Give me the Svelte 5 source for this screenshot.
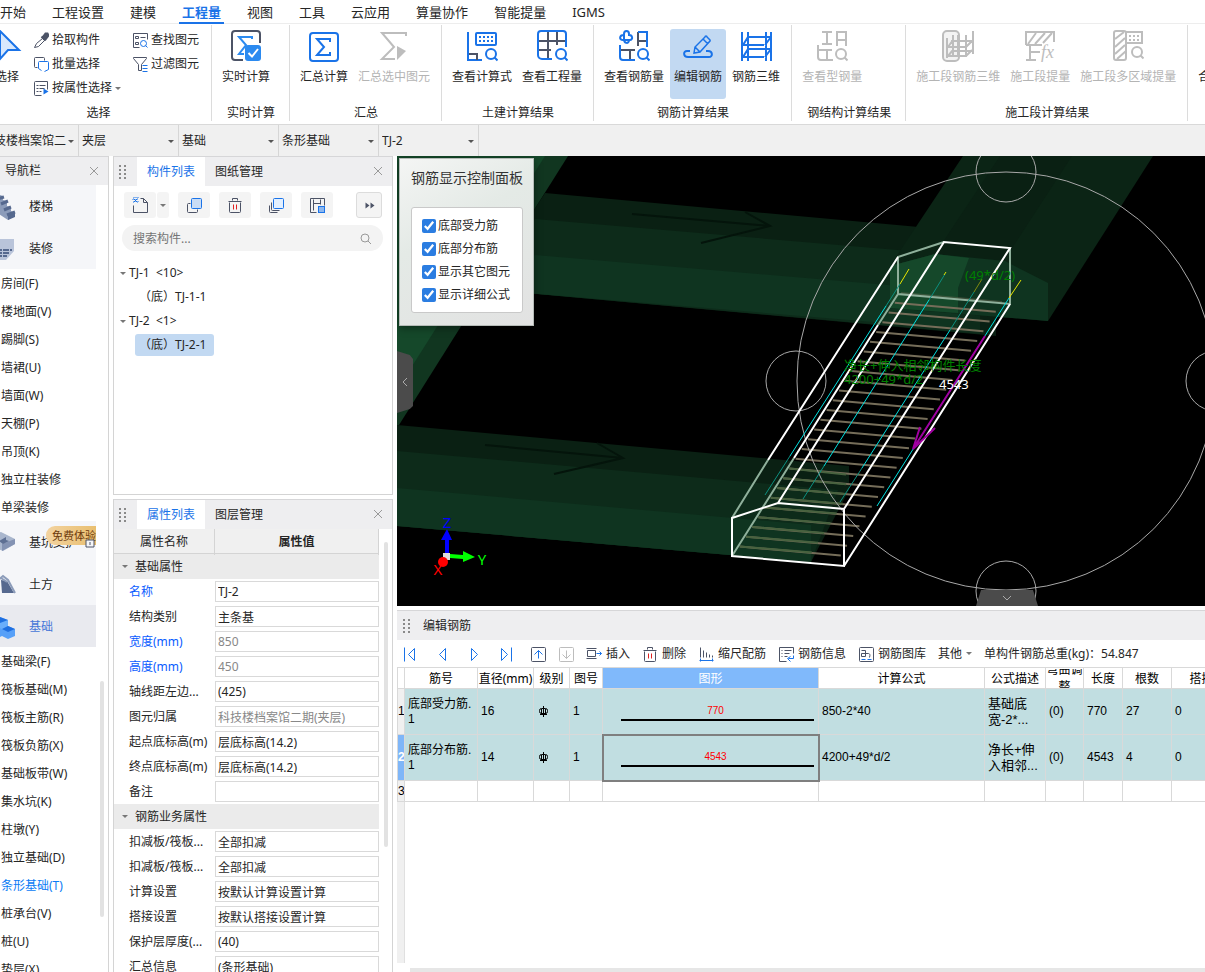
<script>
	const blue = '#1a73e8';
	const dark = '#4c5366';
	const gray = '#bdbdbd';

	const icons = {
		sigmaCheck: `<path d="M13 30H5a3 3 0 0 1-3-3V4a3 3 0 0 1 3-3h22a3 3 0 0 1 3 3v9" stroke="${dark}" stroke-width="2"/><path d="M22 9V7H9l7 8-7 9h5" stroke="#2b8af0" stroke-width="2"/><rect x="15" y="15" width="16" height="16" rx="3" fill="#2b8af0" stroke="none"/><path d="M18.500 23l3.500 3.500 6-7.500" stroke="#fff" stroke-width="2"/>`,
		sigma: `<rect x="2" y="3" width="28" height="28" rx="3" stroke="${blue}" stroke-width="2"/><path d="M22 12V9H9l7 8-7 8h13v-3" stroke="${blue}" stroke-width="2"/>`,
		sigmaCursor: `<path d="M28 6V3H4l12 14L4 29h13" stroke="${gray}" stroke-width="2"/><path d="M19 16v14l9-9z" fill="${gray}" stroke="none"/>`,
		formula: `<path d="M2 2v28h14" stroke="${blue}" stroke-width="2"/><path d="M3 24h8v6" stroke="${dark}" stroke-width="2"/><rect x="10" y="3" width="20" height="12" rx="1" stroke="${blue}" stroke-width="2"/><path d="M13 7h14M13 11h14" stroke="${blue}" stroke-width="2" stroke-dasharray="2 2"/><circle cx="25" cy="24" r="5" stroke="${blue}" stroke-width="2"/><path d="M28.500 27.500l3 3" stroke="${blue}" stroke-width="2"/>`,
		quantity: `<path d="M3 11h26M3 20h12M12 2v28M21 2v13" stroke="${dark}" stroke-width="2"/><path d="M16 29H6a4 4 0 0 1-4-4V4a3 3 0 0 1 3-3h22a3 3 0 0 1 3 3v13" stroke="${blue}" stroke-width="2"/><circle cx="25" cy="24" r="5" stroke="${blue}" stroke-width="2"/><path d="M28.500 27.500l3 3" stroke="${blue}" stroke-width="2"/>`,
		rebarQty: `<path d="M11 4c0-4-5-4-5 0v5c0 5 5 5 5 1M6 5c-5 0-5 5-1 5h7c3 0 3-5-1-5h-1" stroke="${blue}" stroke-width="2"/><path d="M20 16V2M21 11h8" stroke="${dark}" stroke-width="2"/><path d="M20 2h9v15" stroke="${blue}" stroke-width="2"/><path d="M2 15v12a3 3 0 0 0 3 3h12" stroke="${blue}" stroke-width="2"/><path d="M3 20h14M12 20v9" stroke="${dark}" stroke-width="2"/><circle cx="25" cy="24" r="5" stroke="${blue}" stroke-width="2"/><path d="M28.500 27.500l3 3" stroke="${blue}" stroke-width="2"/>`,
		rebarEdit: `<path d="M8 21H5c-4 0-4 6 1 6h21c4 0 4-6-1-6h-2" stroke="${blue}" stroke-width="2"/><path d="M12 23l1-6L23 7a1 1 0 0 1 2 0l3 3a1 1 0 0 1 0 1L18 22zM21 9l5 5M13 17l5 5" stroke="${blue}" stroke-width="1.500"/>`,
		rebar3d: `<path d="M2 2v29M8 2v29M26 2v29M31 2v29M8 7h22M8 15h16M8 19h22M4 27h20M3 15l5-8M25 15l6-8M3 27l5-8M25 27l6-8M3 15h6M3 27h6" stroke="${blue}" stroke-width="2"/>`,
		steelQty: `<path d="M6 2h10M6 14h10M11 2v12M21 16V2h9v14M21 10h9M2 15v12a3 3 0 0 0 3 3h12M3 20h13M11 20v9" stroke="${gray}" stroke-width="2"/><circle cx="25" cy="24" r="5" stroke="${gray}" stroke-width="2"/><path d="M28.500 27.500l3 3" stroke="${gray}" stroke-width="2"/>`,
		stage3d: `<rect x="1" y="1" width="16" height="30" rx="4" fill="#f3f3f3" stroke="${gray}" stroke-width="2"/><path d="M5 8v20M11 5v22M16 5v22M24 5v22M31 1v23M9 11h21M6 17h18M11 21h19M6 26h18M6 17l5-7M6 26l5-6M24 17l6-6M24 26l6-6" stroke="${gray}" stroke-width="2"/>`,
		stageQty: `<path d="M2 15V2h28v10M2 15h16M4 14L12 3M11 14L21 3M19 13l9-10M6 15v14M2 30h10M6 22h10" stroke="${gray}" stroke-width="2"/><text x="17" y="28" font-size="18" font-style="italic" font-family="Liberation Serif" fill="${gray}" stroke="none">fx</text>`,
		stageArea: `<rect x="2" y="1" width="12" height="29" rx="2" stroke="${gray}" stroke-width="2"/><path d="M3 9l9-7M3 17l10-9M3 24l10-9M5 29l9-8" stroke="${gray}" stroke-width="2"/><path d="M14 2h16v11H14" stroke="${gray}" stroke-width="2"/><path d="M17 6h11M17 10h11" stroke="${gray}" stroke-width="2" stroke-dasharray="2 2"/><circle cx="25" cy="22" r="5" stroke="${gray}" stroke-width="2"/><path d="M28.500 25.500l3 3" stroke="${gray}" stroke-width="2"/>`,
		cursor: `<path d="M9 1v28l8-9h11z" fill="#d8e8fc" stroke="${blue}" stroke-width="2"/>`,
		dropper: `<path d="M1 15l2-4 6-5 2 2-6 6z" stroke="${dark}"/><path d="M8 4l4 4M9 5l3-4 2 0 1 2-3 4z" fill="${dark}" stroke="${dark}" stroke-width="2"/>`,
		batch: `<path d="M4 11H2a1 1 0 0 1-1-1V2a1 1 0 0 1 1-1h8a1 1 0 0 1 1 1v2" stroke="${dark}"/><path d="M11 15l4-2V6a1 1 0 0 0-1-1H6a1 1 0 0 0-1 1v6l3 2" stroke="${blue}"/>`,
		byProp: `<path d="M8 15H2a1 1 0 0 1-1-1V2a1 1 0 0 1 1-1h12v8M3 5h2M6 5h6M3 8h2M6 8h5M3 11h2M6 11h2" stroke="${dark}"/><path d="M10 8v6l5-3z" fill="${blue}" stroke="none"/>`,
		find: `<path d="M7 15H1V1h14v6M3 4h3v2H3zM8 5h5M3 10h3v2H3z" stroke="${dark}"/><circle cx="11" cy="11" r="3" stroke="${blue}"/><path d="M13 13l2 2" stroke="${blue}"/>`,
		filter: `<path d="M6 14V8L1 2V1h13v1L9 8v6z" stroke="${dark}"/><path d="M10 9h5M10 12h5M10 15h5" stroke="${blue}"/>`,
		newFile: `<path d="M1 8v7h14V5l-4-4H8M11 1v4h4" stroke="${dark}"/><path d="M1 0h5M0 2h5M1 4h5" stroke="${blue}" stroke-dasharray="1 1"/><path d="M1 1l4 4M5 1L1 5" stroke="${blue}"/>`,
		copy: `<path d="M4 6H2a1 1 0 0 0-1 1v7a1 1 0 0 0 1 1h8a1 1 0 0 0 1-1v-2" stroke="${dark}"/><rect x="5" y="1" width="10" height="10" rx="1" fill="#c9dcf5" stroke="${blue}"/>`,
		trash: `<path d="M1 4h13M5 3V1h5v2M2 5v9a1 1 0 0 0 1 1h9a1 1 0 0 0 1-1V5" stroke="${dark}"/><path d="M6 7v5M9 7v5" stroke="#e02020"/>`,
		layers: `<path d="M3 5v7a1 1 0 0 0 1 1h7M1 8v6a1 1 0 0 0 1 1h7" stroke="${dark}"/><rect x="5" y="1" width="10" height="10" rx="1" fill="#e3f0ff" stroke="${blue}"/>`,
		save: `<path d="M7 15H1V1h14v7M4 2v11M4 6h7M11 2v5" stroke="${dark}"/><rect x="9" y="9" width="6" height="6" fill="#8db7ee" stroke="${blue}"/>`,
		more: `<path d="M4 5v6l4-3zM9 5v6l4-3z" fill="${dark}" stroke="none"/>`,
		first: `<path d="M2 1v14M12 2L6 8l6 6z" stroke="${blue}"/>`,
		prev: `<path d="M11 2L5 8l6 6z" stroke="${blue}"/>`,
		next: `<path d="M5 2l6 6-6 6z" stroke="${blue}"/>`,
		last: `<path d="M13 1v14M3 2l6 6-6 6z" stroke="${blue}"/>`,
		up: `<rect x="1" y="1" width="14" height="14" rx="1" stroke="${dark}"/><path d="M8 12V4M4 8l4-4 4 4" stroke="${blue}"/>`,
		down: `<rect x="1" y="1" width="14" height="14" rx="1" stroke="${gray}"/><path d="M8 4v8M4 8l4 4 4-4" stroke="${gray}"/>`,
		insert: `<path d="M0 2h10M0 12h10M1 4v6h8V4z" stroke="${dark}"/><path d="M10 7h5M13 5l2 2-2 2" stroke="${blue}"/>`,
		scale: `<path d="M2 1v10M5 4v7M8 6v5M11 8v3M14 9v2" stroke="${dark}"/><path d="M1 14h14M2 12v3M14 12v3" stroke="${blue}"/>`,
		info: `<path d="M8 15H1V1h14v6M3 4h1M6 4h7M3 7h1M6 7h5M3 10h1M6 10h3" stroke="${dark}"/><path d="M15 9v3h-5M12 10l-3 2 3 3" stroke="${blue}"/>`,
		library: `<rect x="1" y="1" width="14" height="14" rx="1" stroke="${dark}"/><path d="M3 4h4v6H3V7h7c1 0 2 1 1 4" stroke="${dark}"/><path d="M3 13h4M9 13h4" stroke="${blue}"/>`,
		stair: `<path d="M4 0l10 3v4l4 1v5l4 1v4l4 2v3l-7 4L4 17z" fill="#8c9cba" stroke="none"/><path d="M8 6l7-2M12 11l7-3M15 17l7-3M18 22l8-3" stroke="#56698f" stroke-width="3"/><path d="M19 22l7-2v4l-7 3z" fill="#56698f" stroke="none"/>`,
		brush: `<path d="M0 4h25v12l-8 9H0z" fill="#b9c4da" stroke="none"/><path d="M0 15h23M0 18h21M0 21h18" stroke="#56698f" stroke-width="2" stroke-dasharray="6 1"/>`,
		pit: `<path d="M4 5l8-2 14 7v5L14 22 4 18z" fill="#a9b6cd" stroke="none"/><path d="M13 15l13-5v5l-13 7z" fill="#8493b3" stroke="none"/><path d="M10 12l7-4v3l3 1-6 3z" fill="#5d6f93" stroke="none"/>`,
		earth: `<path d="M12 9l6 1 7 12H13z" fill="#56698f" stroke="none"/><path d="M8 22V10l6-5 5 4 7 13M12 7l6 4" stroke="#8c9cba" stroke-width="2"/>`,
		cubes: `<path d="M11 4l8 3v7l-8 3-7-3V7z" fill="#6aaefb" stroke="none"/><path d="M19 13l7 3v7l-7 3-6-3v-7zM7 13l6 3v7l-6 3z" fill="#57a0f8" stroke="none"/><path d="M11 4l8 3-8 3-7-3zM19 13l7 3-7 3-6-3z" fill="#1f6fe0" stroke="none"/>`
	};

	const menus = ['开始', '工程设置', '建模', '工程量', '视图', '工具', '云应用', '算量协作', '智能提量', 'IGMS'];
	let activeMenu = $state('工程量');

	const groups = [
		{ title: '实时计算', tools: [['sigmaCheck', '实时计算']] },
		{ title: '汇总', tools: [['sigma', '汇总计算'], ['sigmaCursor', '汇总选中图元', true]] },
		{ title: '土建计算结果', tools: [['formula', '查看计算式'], ['quantity', '查看工程量']] },
		{ title: '钢筋计算结果', tools: [['rebarQty', '查看钢筋量'], ['rebarEdit', '编辑钢筋'], ['rebar3d', '钢筋三维']] },
		{ title: '钢结构计算结果', tools: [['steelQty', '查看型钢量', true]] },
		{ title: '施工段计算结果', tools: [['stage3d', '施工段钢筋三维', true], ['stageQty', '施工段提量', true], ['stageArea', '施工段多区域提量', true]] }
	];

	const filters = [['楼栋', '科技楼档案馆二'], ['楼层', '夹层'], ['类别', '基础'], ['类型', '条形基础'], ['构件', 'TJ-2']];

	const navItems = [
		{ icon: 'stair', name: '楼梯' },
		{ icon: 'brush', name: '装修' },
		...['房间(F)', '楼地面(V)', '踢脚(S)', '墙裙(U)', '墙面(W)', '天棚(P)', '吊顶(K)', '独立柱装修', '单梁装修'].map((name) => ({ name })),
		{ icon: 'pit', name: '基坑支护', trial: true },
		{ icon: 'earth', name: '土方' },
		{ icon: 'cubes', name: '基础', open: true },
		...['基础梁(F)', '筏板基础(M)', '筏板主筋(R)', '筏板负筋(X)', '基础板带(W)', '集水坑(K)', '柱墩(Y)', '独立基础(D)', '条形基础(T)', '桩承台(V)', '桩(U)', '垫层(X)'].map((name) => ({ name }))
	];
	let activeNav = $state('条形基础(T)');

	const tree = [
		{ name: 'TJ-1', count: 10, child: 'TJ-1-1' },
		{ name: 'TJ-2', count: 1, child: 'TJ-2-1' }
	];
	let picked = $state('TJ-2-1');

	const props = [
		{
			title: '基础属性',
			rows: [
				['名称', 'TJ-2', 'key'],
				['结构类别', '主条基'],
				['宽度(mm)', '850', 'key off'],
				['高度(mm)', '450', 'key off'],
				['轴线距左边...', '(425)'],
				['图元归属', '科技楼档案馆二期(夹层)', 'off'],
				['起点底标高(m)', '层底标高(14.2)'],
				['终点底标高(m)', '层底标高(14.2)'],
				['备注', '']
			]
		},
		{
			title: '钢筋业务属性',
			rows: [
				['扣减板/筏板...', '全部扣减'],
				['扣减板/筏板...', '全部扣减'],
				['计算设置', '按默认计算设置计算'],
				['搭接设置', '按默认搭接设置计算'],
				['保护层厚度(...', '(40)'],
				['汇总信息', '(条形基础)']
			]
		}
	];

	let display = $state([
		{ label: '底部受力筋', on: true },
		{ label: '底部分布筋', on: true },
		{ label: '显示其它图元', on: true },
		{ label: '显示详细公式', on: true }
	]);

	const columns = [['筋号', 73], ['直径(mm)', 56], ['级别', 36], ['图号', 33], ['图形', 216], ['计算公式', 166], ['公式描述', 61], ['弯曲调整', 38], ['长度', 39], ['根数', 49], ['搭接', 60]];
	const bars = [
		{ name: '底部受力筋.', d: 16, shape: 770, formula: '850-2*40', desc: ['基础底', '宽-2*...'], len: 770, count: 27 },
		{ name: '底部分布筋.', d: 14, shape: 4543, formula: '4200+49*d/2', desc: ['净长+伸', '入相邻...'], len: 4543, count: 4 }
	];
	let activeBar = $state(1);

	const rungs = Array.from({ length: 27 }, (_, i) => ({ x: 901 - i * 6.2, y: 293 + i * 9.75 }));
</script>

{#snippet icon(name, size = 16)}
	<svg class="icon" width={size} height={size} viewBox={size === 16 ? '-.5 -.5 16 16' : `0 0 ${size} ${size}`} fill="none" aria-hidden="true">{@html icons[name] ?? ''}</svg>
{/snippet}

{#snippet grip()}
	<svg class="grip" width="8" height="16" viewBox="0 0 8 16" fill="#8a8a8a" aria-hidden="true">
		{#each [1, 5, 9, 13] as y}
			<rect x="0" {y} width="2" height="2" /><rect x="5" {y} width="2" height="2" />
		{/each}
	</svg>
{/snippet}

{#snippet close()}
	<button class="close" aria-label="关闭">
		<svg width="10" height="10" viewBox="0 0 10 10" stroke="#999" fill="none"><path d="M1 1l8 8M9 1L1 9" /></svg>
	</button>
{/snippet}

<div class="app">
	<nav class="menu">
		{#each menus as m}
			<button class:active={m === activeMenu} onclick={() => (activeMenu = m)}>{m}</button>
		{/each}
	</nav>

	<div class="ribbon">
		<section class="group pick-group">
			<div class="tools">
				<button class="tool">{@render icon('cursor', 32)}<span>选择</span></button>
				<div class="small-tools">
					<button>{@render icon('dropper')}拾取构件</button>
					<button>{@render icon('find')}查找图元</button>
					<button>{@render icon('batch')}批量选择</button>
					<button>{@render icon('filter')}过滤图元</button>
					<button>{@render icon('byProp')}按属性选择<i class="caret"></i></button>
				</div>
			</div>
			<h2>选择</h2>
		</section>
		{#each groups as g}
			<section class="group">
				<div class="tools">
					{#each g.tools as [ic, label, off]}
						<button class="tool" class:on={label === '编辑钢筋'} disabled={off}>{@render icon(ic, 32)}<span>{label}</span></button>
					{/each}
				</div>
				<h2>{g.title}</h2>
			</section>
		{/each}
		<section class="group">
			<div class="tools"><button class="tool start">{@render icon('', 32)}<span>合法性</span></button></div>
		</section>
	</div>

	<div class="context">
		{#each filters as [label, value]}
			<label><select aria-label={label}><option>{value}</option></select></label>
		{/each}
	</div>

	<main>
		<aside class="nav">
			<header><h3>导航栏</h3>{@render close()}</header>
			<div class="nav-body">
				<ul>
					{#each navItems as item}
						<li>
							<a href="#nav" class:cat={item.icon} class:open={item.open} class:current={item.name === activeNav} onclick={() => (activeNav = item.name)}>
								{#if item.icon}{@render icon(item.icon, 28)}{/if}
								{item.name}
								{#if item.trial}
									<span class="badge">免费体验</span>
									<svg class="lock" width="10" height="10" viewBox="0 0 10 10" fill="#f5f6f9" stroke={dark} aria-hidden="true"><path d="M1 2h8v7H1zM5 4v3" /></svg>
								{/if}
							</a>
						</li>
					{/each}
				</ul>
				<div class="scroll"></div>
			</div>
		</aside>

		<div class="docks">
			<section class="dock parts">
				<header>
					{@render grip()}
					<button class="tab active">构件列表</button>
					<button class="tab">图纸管理</button>
					{@render close()}
				</header>
				<div class="bar">
					<div class="split">
						<button aria-label="新建">{@render icon('newFile')}</button>
						<button class="drop" aria-label="新建选项"><i class="caret"></i></button>
					</div>
					<button aria-label="复制">{@render icon('copy')}</button>
					<button aria-label="删除">{@render icon('trash')}</button>
					<button aria-label="层间复制">{@render icon('layers')}</button>
					<button aria-label="存档">{@render icon('save')}</button>
					<button class="more" aria-label="更多">{@render icon('more')}</button>
				</div>
				<label class="search">
					<input aria-label="搜索构件" placeholder="搜索构件..." />
					<svg width="12" height="12" viewBox="0 0 12 12" fill="none" stroke="#999"><circle cx="5" cy="5" r="4" /><path d="M8 8l3 3" /></svg>
				</label>
				<ul class="tree">
					{#each tree as t}
						<li>
							<i class="caret"></i>{t.name}&nbsp; &lt;{t.count}&gt;
							<button class:picked={picked === t.child} onclick={() => (picked = t.child)}>（底）{t.child}</button>
						</li>
					{/each}
				</ul>
			</section>

			<section class="dock attrs">
				<header>
					{@render grip()}
					<button class="tab active">属性列表</button>
					<button class="tab">图层管理</button>
					{@render close()}
				</header>
				<div class="attr-body">
					<div class="sheet">
						<div class="heads"><span>属性名称</span><b>属性值</b></div>
						{#each props as g, gi}
							<h4><i class="caret"></i>{g.title}</h4>
							{#each g.rows as [name, value, kind], i}
								<div class="field {kind}">
									<label for="p{gi}-{i}">{name}</label>
									<input id="p{gi}-{i}" {value} />
								</div>
							{/each}
						{/each}
					</div>
					<div class="scroll"></div>
				</div>
			</section>
		</div>

		<div class="work">
			<div class="view">
				<svg class="scene" viewBox="397 156 808 450" preserveAspectRatio="xMidYMid slice">
					<!-- neighbouring beams -->
					<path d="M397 156h171L399 425h-2z" fill="#113620" />
					<path d="M397 156h148L397 390z" fill="#15482a" />
					<path d="M545 193L996 234V336L526 293V222z" fill="#0a2013" />
					<path d="M535 219L980 257V334L526 293V232z" fill="#0d2b1a" />
					<path d="M535 255L958 291V329L526 293V262z" fill="#0f3420" />
					<path d="M963 156h190L1048 321 890 308V266z" fill="#0b2415" />
					<path d="M1000 156h72L1003 262 935 254z" fill="#0a2013" />
					<path d="M890 266l45-12 70 7 43 22v38L890 308z" fill="#0f3420" />
					<path d="M890 266l45-12 34 4-11 30v25L890 308z" fill="#15482a" />
					<path d="M397 425L849 466V490L811 562 397 526z" fill="#0a2013" />
					<path d="M397 451L838 490 811 562 397 526z" fill="#0d2b1a" />
					<path d="M397 488L811 525V562L397 526z" fill="#0f3420" />
					<g stroke="#04140b" stroke-width="2" fill="none">
						<path d="M632 214l138 12M745 212l25 14-69 17M485 445l138 13M597 443l26 15-69 16" />
					</g>

					<g stroke="#756d59" stroke-width="2">
						{#each rungs as r, i}
							<line x1={r.x} y1={r.y} x2={r.x + 101} y2={r.y + 9} opacity={i === 0 ? 0.4 : 1} />
							{#if i > 17}<line x1={r.x} y1={r.y} x2={Math.min(r.x + 72, 846)} y2={r.y + 6} stroke="#48623f" />{/if}
						{/each}
					</g>

					<g fill="none" stroke="#a8a8a8">
						<circle cx="1006" cy="381" r="209" />
						<circle cx="1006" cy="172" r="30" />
						<circle cx="796" cy="381" r="30" />
						<circle cx="1006" cy="591" r="30" />
						<circle cx="1216" cy="381" r="30" />
					</g>

					<g fill="none" stroke-width="2" stroke="#8fb09b">
						<path d="M944 242l-46 15v37l112 10v-56M732 518l36-58M732 556l62-98M878 325l20-31" />
					</g>
					<g fill="none" stroke-width="2" stroke="#fff">
						<path d="M732 518l46-15 66 6v57l-112-10zM768 460L898 257M778 503L944 242l66 6L844 509M794 458L878 325M844 566L1010 304" />
					</g>

					<g fill="none" stroke="#00e0e0">
						<path d="M790 456L886 306M824 466L929 300M862 468L950 330M877 506L1009 298" />
						<path d="M765 495l25-39M886 306l14-22M803 499l21-33M929 300l16-26M840 502l22-34M950 330l24-38" stroke="#0c9080" />
						<path d="M900 284l9-15M1009 298l12-18M944 275l2-3" stroke="#e6e600" />
						<path d="M974 292l8-13" stroke="#7f8a10" />
					</g>
					<path d="M985 336L913 449M920 427l-7 22 22-21" fill="none" stroke="#a000a0" stroke-width="2" />

					<g font-size="13">
						<text x="965" y="280" fill="#008000">(49*d/2)</text>
						<text x="844" y="370" fill="#008000">净长+伸入相邻构件长度</text>
						<text x="844" y="384" fill="#008000">4200+49*d/2</text>
						<text x="939" y="389" fill="#fff">4543</text>
					</g>

					<!-- axis marker -->
					<rect x="443" y="553" width="7" height="7" fill="#ddd" />
					<path d="M445 553v-13h-4l6-11 5 11h-3v13z" fill="#0000ff" />
					<path d="M450 554l13 1v-4l12 6-12 5v-3l-13-1z" fill="#00ff00" />
					<circle cx="443" cy="562" r="5" fill="#f00" />
					<g font-size="15" text-anchor="middle">
						<text x="447" y="528" fill="#0000ff">Z</text>
						<text x="482" y="565" fill="#00ff00">Y</text>
						<text x="438" y="575" fill="#f00">X</text>
					</g>
				</svg>

				<div class="panel">
					<h3>钢筋显示控制面板</h3>
					<div class="checks">
						{#each display as opt}
							<label><input type="checkbox" bind:checked={opt.on} />{opt.label}</label>
						{/each}
					</div>
				</div>
				<button class="fold left" aria-label="收起左侧">
					<svg width="6" height="10" viewBox="0 0 6 10" fill="none" stroke="#aaa"><path d="M5 1L1 5l4 4" /></svg>
				</button>
				<button class="fold bottom" aria-label="收起下方">
					<svg width="10" height="6" viewBox="0 0 10 6" fill="none" stroke="#aaa"><path d="M1 1l4 4 4-4" /></svg>
				</button>
			</div>

			<section class="editor">
				<header>{@render grip()}<h3>编辑钢筋</h3></header>
				<div class="actions">
					<div class="steps">
						<button aria-label="首行">{@render icon('first')}</button>
						<button aria-label="上一行">{@render icon('prev')}</button>
						<button aria-label="下一行">{@render icon('next')}</button>
						<button aria-label="末行">{@render icon('last')}</button>
					</div>
					<div class="moves">
						<button aria-label="上移">{@render icon('up')}</button>
						<button aria-label="下移" disabled>{@render icon('down')}</button>
					</div>
					<button>{@render icon('insert')}插入</button>
					<button>{@render icon('trash')}删除</button>
					<button>{@render icon('scale')}缩尺配筋</button>
					<button>{@render icon('info')}钢筋信息</button>
					<button>{@render icon('library')}钢筋图库</button>
					<button>其他<i class="caret"></i></button>
					<span>单构件钢筋总重(kg)：54.847</span>
				</div>
				<div class="grid">
					<table>
						<colgroup>
							<col style="width: 7px" />
							{#each columns as [, w]}<col style="width: {w}px" />{/each}
						</colgroup>
						<thead>
							<tr>
								<th></th>
								{#each columns as [name]}
									<th class:hot={name === '图形'}><div>{name}</div></th>
								{/each}
							</tr>
						</thead>
						<tbody>
							{#each bars as b, i}
								<tr class="bar-row" class:active={i === activeBar} onclick={() => (activeBar = i)}>
									<th>{i + 1}</th>
									<td class="name">{b.name}<br />1</td>
									<td>{b.d}</td>
									<td>
										<svg class="grade" width="11" height="11" viewBox="0 0 11 11" fill="none" stroke="#000" role="img" aria-label="HRB400"><rect x="1.500" y="2.500" width="8" height="5" rx="2" /><path d="M5.500 0v11M3.500 3v5M7.500 3v5M2 8.500h7" /></svg>
									</td>
									<td>1</td>
									<td class="shape"><span>{b.shape}</span></td>
									<td>{b.formula}</td>
									<td class="desc">{b.desc[0]}<br />{b.desc[1]}</td>
									<td>(0)</td>
									<td>{b.len}</td>
									<td>{b.count}</td>
									<td>0</td>
								</tr>
							{/each}
							<tr class="blank">
								<th>3</th>
								{#each columns as _}<td></td>{/each}
							</tr>
						</tbody>
					</table>
					<div class="gutter"></div>
				</div>
				<div class="hscroll"></div>
			</section>
		</div>
	</main>
</div>

<style>
	:global(body) {
		margin: 0;
		overflow: hidden;
	}
	.app {
		display: flex;
		flex-direction: column;
		height: 100vh;
		overflow: hidden;
		background: #fff;
		color: #262626;
		font: 12px/20px 'Noto Sans', 'Noto Sans CJK SC', sans-serif;
	}
	.app * {
		box-sizing: border-box;
	}
	button,
	input,
	select {
		font: inherit;
		color: inherit;
		border: 0;
		background: none;
		padding: 0;
		margin: 0;
		white-space: nowrap;
	}
	h2,
	h3,
	h4,
	ul {
		margin: 0;
		padding: 0;
		font-size: 12px;
		font-weight: 400;
		list-style: none;
	}
	a {
		color: inherit;
		text-decoration: none;
	}
	.icon,
	.grip {
		flex: none;
		display: block;
	}
	.caret {
		display: inline-block;
		flex: none;
		border: 3px solid transparent;
		border-top-color: #777;
		border-bottom: 0;
	}

	.menu {
		display: flex;
		flex: none;
		gap: 20px;
		height: 24px;
		margin-left: -3px;
		border-bottom: 1px solid #ededed;
		font-size: 13px;
	}
	.menu button {
		height: 24px;
		padding: 2px 3px 0;
		border-bottom: 2px solid transparent;
	}
	.menu .active {
		color: #1a73e8;
		border-color: #1a73e8;
		font-weight: 700;
	}

	.ribbon {
		display: flex;
		flex: none;
		height: 101px;
		overflow: hidden;
		border-bottom: 1px solid #d9d9d9;
	}
	.group {
		flex: none;
		position: relative;
		padding-top: 5px;
		border-right: 1px solid transparent;
		border-image: linear-gradient(transparent 2px, #dcdcdc 2px 96px, transparent 96px) 1;
	}
	.group h2 {
		padding: 1px 14px 0 15px;
		line-height: 25px;
		text-align: center;
	}
	.tools {
		display: flex;
		gap: 2px;
		height: 70px;
		padding: 0 7px 0 6px;
	}
	.tool {
		display: flex;
		flex-direction: column;
		align-items: center;
		padding: 1px 4px 0;
		border-radius: 3px;
		line-height: 30px;
	}
	.tool.on {
		background: #c2d9f2;
	}
	.tool:disabled {
		color: #b4b4b4;
	}
	.tool.start {
		align-items: flex-start;
	}
	.pick-group {
		width: 227px;
		margin-left: -15px;
	}
	.pick-group .tools {
		gap: 6px;
		padding: 0 2px;
	}
	.small-tools {
		display: grid;
		grid-template-columns: 99px auto;
		grid-template-rows: repeat(3, 24px);
		margin-top: -1px;
	}
	.small-tools button {
		display: flex;
		align-items: center;
		gap: 3px;
	}

	.context {
		display: flex;
		flex: none;
		height: 31px;
		margin-left: -21px;
		background: #f0f0f0;
	}
	.context label {
		position: relative;
		width: 100px;
		border-right: 1px solid #d6d6d6;
	}
	.context label::after {
		content: '';
		position: absolute;
		right: 4px;
		top: 15px;
		border: 3px solid transparent;
		border-top-color: #555;
		border-bottom: 0;
	}
	.context select {
		width: 100%;
		height: 31px;
		padding: 0 0 0 3px;
		appearance: none;
	}

	main {
		display: flex;
		flex: 1;
		min-height: 0;
		gap: 4px;
	}
	header {
		display: flex;
		flex: none;
		align-items: center;
		height: 30px;
		background: #eeeef0;
		border-top: 1px solid #d6d6d8;
	}
	.close {
		margin-left: auto;
		padding: 0 9px;
		line-height: 10px;
	}

	.nav {
		display: flex;
		flex: none;
		flex-direction: column;
		width: 109px;
		border-right: 1px solid #d4d4d4;
	}
	.nav header {
		padding-left: 5px;
		height: 29px;
	}
	.nav-body {
		display: flex;
		flex: 1;
		min-height: 0;
		gap: 4px;
	}
	.nav ul {
		width: 96px;
		overflow: hidden;
	}
	.nav a {
		display: flex;
		align-items: center;
		height: 28px;
		padding: 2px 0 0 1px;
		white-space: nowrap;
	}
	.nav .cat {
		position: relative;
		height: 42px;
		margin-left: -11px;
		padding: 2px 0 0;
		gap: 12px;
		background: #f5f6f9;
	}
	.nav .open {
		background: #e9eaef;
		color: #4677d8;
	}
	.nav .current {
		color: #0a7bf5;
	}
	.badge {
		position: absolute;
		right: 0;
		top: 5px;
		padding: 0 0 0 6px;
		border-radius: 9px 0 0 9px;
		background: linear-gradient(90deg, #f3d3a0, #e9bf70);
		color: #6d3a0c;
		font-size: 11px;
		line-height: 19px;
	}
	.lock {
		position: absolute;
		right: 1px;
		top: 17px;
	}
	.scroll {
		width: 4px;
		border-radius: 2px;
		background: #e2e2e2;
	}
	.nav .scroll {
		margin: 496px 0 55px;
	}

	.docks {
		display: flex;
		flex: none;
		flex-direction: column;
		gap: 4px;
		width: 280px;
	}
	.dock {
		display: flex;
		flex-direction: column;
		min-height: 0;
		border: 1px solid #d4d4d4;
		border-top: 0;
	}
	.dock .grip {
		margin: 0 10px 0 5px;
	}
	.tab {
		align-self: stretch;
		padding: 0 10px;
	}
	.tab.active {
		background: #fff;
		color: #1a73e8;
	}
	.parts {
		flex: 0 0 339px;
	}
	.attrs {
		flex: 1;
		border-bottom: 0;
	}
	.bar {
		display: flex;
		gap: 9px;
		padding: 6px 10px 7px;
	}
	.bar button {
		display: flex;
		align-items: center;
		justify-content: center;
		width: 32px;
		height: 26px;
		border-radius: 3px;
		background: #f4f4f4;
	}
	.split {
		display: flex;
		gap: 1px;
	}
	.bar .drop {
		width: 12px;
	}
	.bar .more {
		width: 26px;
		margin-left: auto;
		border: 1px solid #dcdcdc;
	}
	.search {
		display: flex;
		align-items: center;
		height: 26px;
		margin: 0 9px 10px 8px;
		padding: 1px 11px 0;
		border-radius: 13px;
		background: #f3f3f3;
	}
	.search input {
		flex: 1;
		min-width: 0;
		outline: 0;
	}
	.search input::placeholder {
		color: #757575;
	}
	.tree li {
		padding-left: 6px;
		line-height: 24px;
	}
	.tree .caret {
		margin-right: 3px;
		vertical-align: 2px;
	}
	.tree button {
		display: block;
		height: 22px;
		margin: 1px 0 1px 15px;
		padding: 0 8px 0 4px;
		border-radius: 3px;
		line-height: 22px;
	}
	.tree .picked {
		background: #c2d9f2;
	}

	.attr-body {
		display: flex;
		flex: 1;
		min-height: 0;
		gap: 5px;
		overflow: hidden;
	}
	.sheet {
		flex: 1;
	}
	.heads {
		display: grid;
		grid-template-columns: 101px 1fr;
		height: 25px;
		background: #f0f0f0;
		border-bottom: 1px solid #d4d4d4;
		text-align: center;
		line-height: 26px;
	}
	.heads span,
	.heads b {
		border-right: 1px solid #d4d4d4;
	}
	.sheet h4 {
		display: flex;
		align-items: center;
		gap: 7px;
		height: 25px;
		padding-left: 8px;
		background: #ebebeb;
	}
	.field {
		display: grid;
		grid-template-columns: 86px 1fr;
		align-items: center;
		height: 25px;
		padding: 0 0 0 15px;
		white-space: nowrap;
	}
	.field input {
		height: 21px;
		min-width: 0;
		padding: 0 2px;
		border: 1px solid #d9d9d9;
	}
	.key label {
		color: #0a5cff;
	}
	.off input {
		color: #888;
	}
	.attrs .scroll {
		flex: none;
		margin: 13px 4px 125px 0;
	}

	.work {
		display: flex;
		flex: 1;
		flex-direction: column;
		gap: 4px;
		min-width: 0;
	}
	.view {
		position: relative;
		flex: 1;
		min-height: 0;
		overflow: hidden;
		background: #000;
	}
	.scene {
		position: absolute;
		width: 100%;
		height: 100%;
	}
	.panel {
		position: absolute;
		left: 2px;
		top: 2px;
		padding: 9px 10px 12px 11px;
		border: 1px solid #b5bbb7;
		background: linear-gradient(150deg, #f4f5f4, #e4eae6 40%, #e2e2e2);
		box-shadow: 0 2px 8px rgba(0, 0, 0, 0.4);
	}
	.panel h3 {
		margin-bottom: 19px;
		font-size: 14px;
		color: #333;
	}
	.checks {
		padding: 6px 10px;
		border: 1px solid #c9c9c9;
		border-radius: 3px;
		background: #fff;
	}
	.checks label {
		display: flex;
		align-items: center;
		gap: 2px;
		height: 23px;
	}
	.checks input {
		width: 14px;
		height: 14px;
		accent-color: #2b7de1;
	}
	.fold {
		position: absolute;
		display: flex;
		align-items: center;
		justify-content: center;
		background: #4b4b4b;
	}
	.fold.left {
		left: 0;
		top: 195px;
		width: 16px;
		height: 62px;
		clip-path: polygon(0 0, 80% 4px, 100% 8px, 100% 55px, 80% 58px, 0 100%);
	}
	.fold.bottom {
		left: calc(50% + 175px);
		bottom: 0;
		width: 62px;
		height: 16px;
		clip-path: polygon(5px 0, 57px 0, 100% 100%, 0 100%);
	}

	.editor {
		display: flex;
		flex: 0 0 362px;
		flex-direction: column;
	}
	.editor header {
		gap: 12px;
		padding-left: 6px;
	}
	.actions {
		display: flex;
		flex: none;
		align-items: center;
		gap: 12px;
		height: 27px;
		padding-left: 5px;
		white-space: nowrap;
	}
	.actions button {
		display: flex;
		align-items: center;
		gap: 4px;
	}
	.steps {
		display: flex;
		gap: 16px;
	}
	.moves {
		display: flex;
		gap: 12px;
		margin-left: 4px;
	}
	.grid {
		display: flex;
		flex: 1;
		flex-direction: column;
		min-height: 0;
		overflow: hidden;
	}
	table {
		flex: none;
		width: 834px;
		table-layout: fixed;
		border-collapse: collapse;
	}
	th,
	td {
		height: 46px;
		padding: 0 3px;
		border: 1px solid #d9d9d9;
		overflow: hidden;
		text-align: left;
		font: 12px/15px 'Liberation Sans', 'Noto Sans CJK SC', sans-serif;
		color: #000;
	}
	thead th,
	thead div {
		height: 21px;
		padding: 0;
		text-align: center;
		font: 12px/17px 'Noto Sans', 'Noto Sans CJK SC', sans-serif;
	}
	thead div {
		display: grid;
		height: 19px;
		place-content: center;
		overflow: hidden;
	}
	thead .hot {
		background: #80b9fb;
		color: #fff;
	}
	tbody th {
		padding: 0;
		background: #f0f0f0;
		text-align: center;
	}
	.bar-row td {
		background: #c1dee1;
	}
	.bar-row.active th {
		background: #7fb6f8;
		color: #fff;
		font-weight: 700;
	}
	td.name {
		white-space: nowrap;
	}
	.bar-row .shape {
		padding: 0 4px 0 18px;
		text-align: center;
	}
	.shape span {
		display: block;
		padding-right: 4px;
		border-bottom: 2px solid #000;
		color: #f00;
		font-size: 10px;
		line-height: 16px;
	}
	.active .shape {
		outline: 2px solid #7f7f7f;
		outline-offset: -1px;
	}
	.desc {
		font-size: 13px;
		line-height: 16px;
		white-space: nowrap;
	}
	.grade {
		display: block;
		margin-left: 1px;
	}
	.blank th,
	.blank td {
		height: 21px;
	}
	.gutter {
		flex: 1;
		width: 8px;
		background: #f0f0f0;
		border-right: 1px solid #e0e0e0;
	}
	.hscroll {
		flex: none;
		height: 4px;
		margin: 5px 0 0 13px;
		background: #e6e6e6;
	}
</style>
